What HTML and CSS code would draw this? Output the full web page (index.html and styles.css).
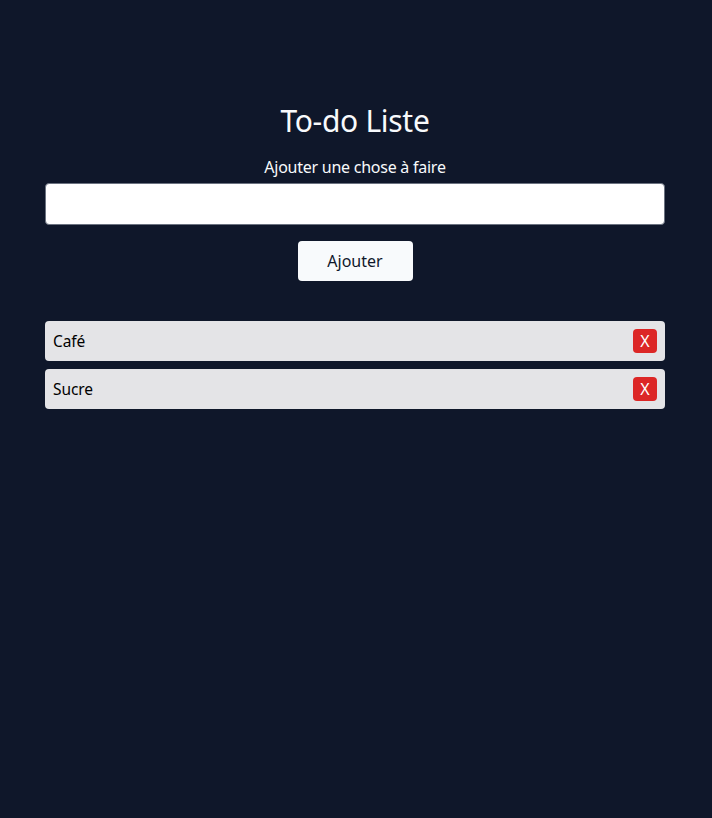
FILE: index.html
```html
<!DOCTYPE html>
<html lang="fr">
<head>
<meta charset="utf-8">
<title>To-do Liste</title>
<link rel="stylesheet" href="styles.css">
</head>
<body>
<main class="app">
  <h1 class="title">To-do Liste</h1>
  <form class="form">
    <label class="label" for="todo">Ajouter une chose à faire</label>
    <input class="input" id="todo" type="text">
    <button class="add" type="button">Ajouter</button>
  </form>
  <ul class="list">
    <li class="item"><span>Café</span><button class="del" type="button">X</button></li>
    <li class="item"><span>Sucre</span><button class="del" type="button">X</button></li>
  </ul>
</main>
</body>
</html>
```
FILE: styles.css
```css
html, body {
  margin: 0;
  padding: 0;
  background: #0f172a;
  height: 100%;
}
body {
  font-family: "Noto Sans", "Open Sans", sans-serif;
  color: #f8fafc;
}
.app {
  width: 620px;
  margin: 0 0 0 45px;
  padding-top: 101px;
}
.title {
  margin: 0;
  font-size: 30px;
  font-weight: 400;
  line-height: 40px;
  text-align: center;
  letter-spacing: -0.3px;
}
.form {
  display: flex;
  flex-direction: column;
  align-items: center;
  margin-top: 14px;
}
.label {
  font-size: 16px;
  line-height: 24px;
  letter-spacing: -0.25px;
}
.input {
  box-sizing: border-box;
  width: 100%;
  height: 42px;
  margin-top: 4px;
  background: #fff;
  border: 1px solid #6b7280;
  border-radius: 4px;
}
.add {
  margin-top: 16px;
  width: 115px;
  height: 40px;
  background: #f8fafc;
  border: none;
  border-radius: 4px;
  font-family: inherit;
  font-size: 16px;
  color: #0f172a;
}
.list {
  list-style: none;
  margin: 40px 0 0;
  padding: 0;
  display: flex;
  flex-direction: column;
  gap: 8px;
}
.item {
  height: 40px;
  box-sizing: border-box;
  display: flex;
  align-items: center;
  justify-content: space-between;
  padding: 0 8px;
  background: #e4e4e7;
  border-radius: 4px;
  color: #000;
  font-size: 15.5px;
  letter-spacing: -0.1px;
}
.del {
  width: 24px;
  height: 24px;
  padding: 0;
  border: none;
  border-radius: 4px;
  background: #dc2626;
  color: #fff;
  font-family: inherit;
  font-size: 16px;
  line-height: 24px;
}
```
